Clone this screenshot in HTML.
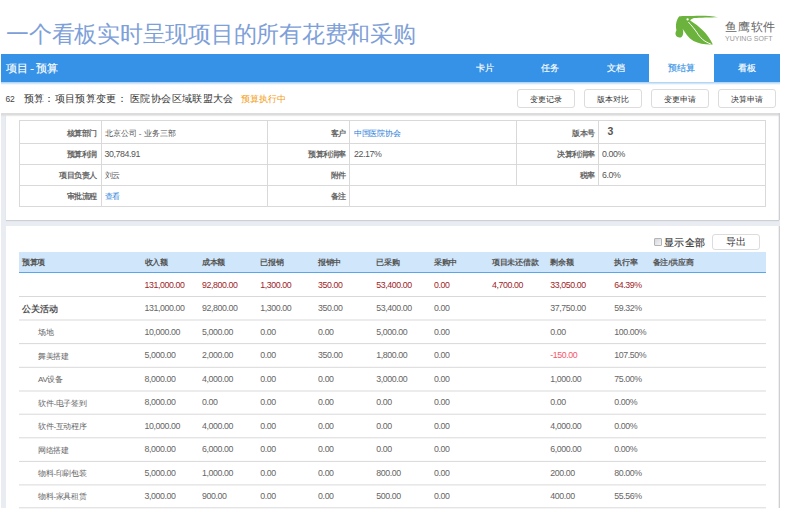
<!DOCTYPE html>
<html><head><meta charset="utf-8">
<style>
*{margin:0;padding:0;box-sizing:border-box}
html,body{width:786px;height:512px;overflow:hidden;background:#fff;font-family:"Liberation Sans",sans-serif;color:#555}
.a{position:absolute;white-space:nowrap;line-height:1}
#title{left:6px;top:23px;font-size:23px;letter-spacing:-0.235px;color:#7ea0d8}
#nav{position:absolute;left:1px;top:54px;width:779px;height:28px;background:#3592e6;}
#navsh{position:absolute;left:1px;top:82px;width:779px;height:3px;background:linear-gradient(rgba(53,146,230,.45),rgba(53,146,230,0))}
.tab{position:absolute;top:0;height:28px;width:65px;text-align:center;color:#fff;font-size:9px;-webkit-text-stroke:0.15px currentColor;line-height:28.5px;text-indent:-1px}
.tab.on{background:#fff;color:#3592e6}
.btn{position:absolute;top:89px;height:18.5px;width:58px;border:1px solid #dcdcdc;border-radius:3px;background:#fff;font-size:8px;line-height:19px;text-align:center;color:#333;letter-spacing:-0.2px}
#frame{position:absolute;left:1px;top:113px;width:779px;height:395px;background:#e9ecf1}
#ftop{position:absolute;left:1px;top:113px;width:779px;height:4px;background:linear-gradient(#dcdcdc 0,#dcdcdc 2px,rgba(220,220,220,.25) 3px,rgba(255,255,255,0) 4px)}
#p1{position:absolute;left:6px;top:115px;width:773px;height:105px;background:#fff;box-shadow:0 1px 1px rgba(0,0,0,.12)}
#p2{position:absolute;left:6px;top:226px;width:773px;height:282px;background:#fff}
.rline{position:absolute;left:778px;width:2px;background:linear-gradient(90deg,rgba(205,205,210,.3) 0,rgba(205,205,210,.3) 1px,#cfcfd3 1px)}
.h{position:absolute;background:#d9d9d9;height:1px}
.v{position:absolute;background:#d9d9d9;width:1px}
.lb{position:absolute;font-size:8px;font-weight:bold;color:#666;text-align:right;line-height:1;white-space:nowrap;letter-spacing:-0.4px}
.vl{position:absolute;font-size:8px;color:#555;line-height:1;white-space:nowrap}
.th{position:absolute;font-size:8px;font-weight:bold;color:#555;line-height:1;white-space:nowrap;letter-spacing:-0.3px}
.td{position:absolute;font-size:8.8px;letter-spacing:-0.4px;color:#666;line-height:1;white-space:nowrap}
.red{color:#9e2428}
.grp{font-size:9px;font-weight:bold;color:#555;letter-spacing:0}
.nm{font-size:8px;letter-spacing:-0.3px;color:#666}
.num{font-size:8.8px;letter-spacing:-0.4px;margin-top:-0.5px}
.neg{color:#f5566a}
</style></head><body>
<div id="title" class="a">一个看板实时呈现项目的所有花费和采购</div>

<svg style="position:absolute;left:670px;top:10px" width="60" height="40" viewBox="0 0 60 40">
<path d="M9.4 6.2 C13 5.8 19 5.9 23 6.1 C31 5.6 40 5.9 48 7.2 C40 7.4 30 7.5 24 8.1 C22.4 8.5 21.2 9.3 20.2 10.6 C29 16 38 24 42.8 34.4 C37 35 29.5 34 23.5 31 C18.5 28 15 22.5 12.6 18.7 C13.6 21 13.6 25 11.6 27 C9.5 28.3 6.2 27.2 5.5 24.2 C5.2 22.3 6.3 21 6.4 20.2 C5.6 17 5.8 12 7.4 9.2 C8 7.9 8.6 6.8 9.4 6.2 Z" fill="#6cb33e"/>
<path d="M18.4 12 C21 15 25 19.5 27 22.7 C30 27.6 34 31.6 40.8 34" stroke="#fff" stroke-width="1" fill="none"/>
<circle cx="17.6" cy="9.4" r="1.15" fill="#fff"/>
</svg>
<div class="a" style="left:725px;top:21px;font-size:12px;letter-spacing:0.8px;color:#666">鱼鹰软件</div>
<div class="a" style="left:725px;top:35px;font-size:7px;color:#999">YUYING SOFT</div>

<div id="nav">
  <div class="a" style="left:5px;top:9px;font-size:11px;letter-spacing:-0.3px;color:#fff;-webkit-text-stroke:0.15px #fff">项目 - 预算</div>
  <div class="tab" style="left:452px">卡片</div>
  <div class="tab" style="left:517px">任务</div>
  <div class="tab" style="left:583px">文档</div>
  <div class="tab on" style="left:648px">预结算</div>
  <div class="tab" style="left:713px;width:66px">看板</div>
</div>

<div id="navsh"></div>
<div class="a" style="left:5.5px;top:95px;font-size:8.5px;letter-spacing:-0.3px;color:#444">62</div>
<div class="a" style="left:23.5px;top:94px;font-size:10px;letter-spacing:0.35px;color:#333">预算：项目预算变更： 医院协会区域联盟大会</div>
<div class="a" style="left:241px;top:95px;font-size:9px;color:#f39a10">预算执行中</div>

<div class="btn" style="left:517px">变更记录</div>
<div class="btn" style="left:584px">版本对比</div>
<div class="btn" style="left:651px">变更申请</div>
<div class="btn" style="left:718px">决算申请</div>

<div id="frame"></div>
<div id="p1"></div>
<div id="p2"></div>
<div id="ftop"></div>
<div class="rline" style="top:113px;height:107px"></div><div class="rline" style="top:226px;height:282px"></div>

<div class="h" style="left:19px;top:120px;width:747px"></div>
<div class="h" style="left:19px;top:143px;width:747px"></div>
<div class="h" style="left:19px;top:164px;width:747px"></div>
<div class="h" style="left:19px;top:185px;width:747px"></div>
<div class="h" style="left:19px;top:206px;width:747px"></div>
<div class="v" style="left:19px;top:120px;height:87px"></div>
<div class="v" style="left:101px;top:120px;height:87px"></div>
<div class="v" style="left:267px;top:120px;height:87px"></div>
<div class="v" style="left:349px;top:120px;height:87px"></div>
<div class="v" style="left:516px;top:120px;height:65px"></div>
<div class="v" style="left:598px;top:120px;height:65px"></div>
<div class="v" style="left:765px;top:120px;height:87px"></div>

<div class="lb" style="right:689px;top:129.6px">核算部门</div>
<div class="vl" style="left:104.5px;top:129.6px">北京公司 - 业务三部</div>
<div class="lb" style="right:689px;top:150.6px">预算利润</div>
<div class="vl num" style="left:104.5px;top:150.6px">30,784.91</div>
<div class="lb" style="right:689px;top:171.6px">项目负责人</div>
<div class="vl" style="left:104.5px;top:171.6px;letter-spacing:-0.3px">刘云</div>
<div class="lb" style="right:689px;top:192.6px">审批流程</div>
<div class="vl" style="left:104.5px;top:192.6px;color:#2a80da;letter-spacing:-0.3px">查看</div>

<div class="lb" style="right:440px;top:129.6px">客户</div>
<div class="vl" style="left:354px;top:129.6px;color:#2a80da;letter-spacing:-0.3px">中国医院协会</div>
<div class="lb" style="right:440px;top:150.6px">预算利润率</div>
<div class="vl num" style="left:354px;top:150.6px">22.17%</div>
<div class="lb" style="right:440px;top:171.6px">附件</div>
<div class="lb" style="right:440px;top:192.6px">备注</div>

<div class="lb" style="right:191px;top:129.6px">版本号</div>
<div class="vl" style="left:607.5px;top:126px;font-size:10.5px;font-weight:bold;color:#555">3</div>
<div class="lb" style="right:191px;top:150.6px">决算利润率</div>
<div class="vl num" style="left:602px;top:150.6px">0.00%</div>
<div class="lb" style="right:191px;top:171.6px">税率</div>
<div class="vl num" style="left:602px;top:171.6px">6.0%</div>

<div style="position:absolute;left:654px;top:238px;width:8px;height:8px;border:1px solid #b4b4b4;border-radius:1px;background:linear-gradient(135deg,#d4d8e0,#f4f4f6)"></div>
<div class="a" style="left:664px;top:237.5px;font-size:10px;letter-spacing:0.4px;color:#333;-webkit-text-stroke:0.15px #333">显示全部</div>
<div class="btn" style="left:712px;top:234px;width:48px;height:16px;font-size:10px;line-height:14px;color:#333">导出</div>

<div id="tbl"><div style="position:absolute;left:19px;top:252px;width:747px;height:20px;background:#cfe6fb"></div>
<div style="position:absolute;left:19px;top:272px;width:747px;height:1px;background:#5aa6ea"></div>
<div class="th" style="left:22px;top:259px">预算项</div>
<div class="th" style="left:144.5px;top:259px">收入额</div>
<div class="th" style="left:202px;top:259px">成本额</div>
<div class="th" style="left:260.3px;top:259px">已报销</div>
<div class="th" style="left:318.1px;top:259px">报销中</div>
<div class="th" style="left:376.2px;top:259px">已采购</div>
<div class="th" style="left:433.9px;top:259px">采购中</div>
<div class="th" style="left:492px;top:259px">项目未还借款</div>
<div class="th" style="left:550.3px;top:259px">剩余额</div>
<div class="th" style="left:614.2px;top:259px">执行率</div>
<div class="th" style="left:652.8px;top:259px">备注/供应商</div>
<div class="td red" style="left:144.5px;top:280.5px">131,000.00</div>
<div class="td red" style="left:202px;top:280.5px">92,800.00</div>
<div class="td red" style="left:260.3px;top:280.5px">1,300.00</div>
<div class="td red" style="left:318.1px;top:280.5px">350.00</div>
<div class="td red" style="left:376.2px;top:280.5px">53,400.00</div>
<div class="td red" style="left:433.9px;top:280.5px">0.00</div>
<div class="td red" style="left:492px;top:280.5px">4,700.00</div>
<div class="td red" style="left:550.3px;top:280.5px">33,050.00</div>
<div class="td red" style="left:614.2px;top:280.5px">64.39%</div>
<div class="td grp" style="left:22px;top:304.9px">公关活动</div>
<div class="td" style="left:144.5px;top:304.0px">131,000.00</div>
<div class="td" style="left:202px;top:304.0px">92,800.00</div>
<div class="td" style="left:260.3px;top:304.0px">1,300.00</div>
<div class="td" style="left:318.1px;top:304.0px">350.00</div>
<div class="td" style="left:376.2px;top:304.0px">53,400.00</div>
<div class="td" style="left:433.9px;top:304.0px">0.00</div>
<div class="td" style="left:550.3px;top:304.0px">37,750.00</div>
<div class="td" style="left:614.2px;top:304.0px">59.32%</div>
<div class="td nm" style="left:38px;top:328.9px">场地</div>
<div class="td" style="left:144.5px;top:327.6px">10,000.00</div>
<div class="td" style="left:202px;top:327.6px">5,000.00</div>
<div class="td" style="left:260.3px;top:327.6px">0.00</div>
<div class="td" style="left:318.1px;top:327.6px">0.00</div>
<div class="td" style="left:376.2px;top:327.6px">5,000.00</div>
<div class="td" style="left:433.9px;top:327.6px">0.00</div>
<div class="td" style="left:550.3px;top:327.6px">0.00</div>
<div class="td" style="left:614.2px;top:327.6px">100.00%</div>
<div class="td nm" style="left:38px;top:352.6px">舞美搭建</div>
<div class="td" style="left:144.5px;top:351.3px">5,000.00</div>
<div class="td" style="left:202px;top:351.3px">2,000.00</div>
<div class="td" style="left:260.3px;top:351.3px">0.00</div>
<div class="td" style="left:318.1px;top:351.3px">350.00</div>
<div class="td" style="left:376.2px;top:351.3px">1,800.00</div>
<div class="td" style="left:433.9px;top:351.3px">0.00</div>
<div class="td neg" style="left:550.3px;top:351.3px">-150.00</div>
<div class="td" style="left:614.2px;top:351.3px">107.50%</div>
<div class="td nm" style="left:38px;top:376.3px">AV设备</div>
<div class="td" style="left:144.5px;top:375.0px">8,000.00</div>
<div class="td" style="left:202px;top:375.0px">4,000.00</div>
<div class="td" style="left:260.3px;top:375.0px">0.00</div>
<div class="td" style="left:318.1px;top:375.0px">0.00</div>
<div class="td" style="left:376.2px;top:375.0px">3,000.00</div>
<div class="td" style="left:433.9px;top:375.0px">0.00</div>
<div class="td" style="left:550.3px;top:375.0px">1,000.00</div>
<div class="td" style="left:614.2px;top:375.0px">75.00%</div>
<div class="td nm" style="left:38px;top:399.5px">软件-电子签到</div>
<div class="td" style="left:144.5px;top:398.2px">8,000.00</div>
<div class="td" style="left:202px;top:398.2px">0.00</div>
<div class="td" style="left:260.3px;top:398.2px">0.00</div>
<div class="td" style="left:318.1px;top:398.2px">0.00</div>
<div class="td" style="left:376.2px;top:398.2px">0.00</div>
<div class="td" style="left:433.9px;top:398.2px">0.00</div>
<div class="td" style="left:550.3px;top:398.2px">0.00</div>
<div class="td" style="left:614.2px;top:398.2px">0.00%</div>
<div class="td nm" style="left:38px;top:423.1px">软件-互动程序</div>
<div class="td" style="left:144.5px;top:421.8px">10,000.00</div>
<div class="td" style="left:202px;top:421.8px">4,000.00</div>
<div class="td" style="left:260.3px;top:421.8px">0.00</div>
<div class="td" style="left:318.1px;top:421.8px">0.00</div>
<div class="td" style="left:376.2px;top:421.8px">0.00</div>
<div class="td" style="left:433.9px;top:421.8px">0.00</div>
<div class="td" style="left:550.3px;top:421.8px">4,000.00</div>
<div class="td" style="left:614.2px;top:421.8px">0.00%</div>
<div class="td nm" style="left:38px;top:446.7px">网络搭建</div>
<div class="td" style="left:144.5px;top:445.4px">8,000.00</div>
<div class="td" style="left:202px;top:445.4px">6,000.00</div>
<div class="td" style="left:260.3px;top:445.4px">0.00</div>
<div class="td" style="left:318.1px;top:445.4px">0.00</div>
<div class="td" style="left:376.2px;top:445.4px">0.00</div>
<div class="td" style="left:433.9px;top:445.4px">0.00</div>
<div class="td" style="left:550.3px;top:445.4px">6,000.00</div>
<div class="td" style="left:614.2px;top:445.4px">0.00%</div>
<div class="td nm" style="left:38px;top:470.2px">物料-印刷包装</div>
<div class="td" style="left:144.5px;top:468.9px">5,000.00</div>
<div class="td" style="left:202px;top:468.9px">1,000.00</div>
<div class="td" style="left:260.3px;top:468.9px">0.00</div>
<div class="td" style="left:318.1px;top:468.9px">0.00</div>
<div class="td" style="left:376.2px;top:468.9px">800.00</div>
<div class="td" style="left:433.9px;top:468.9px">0.00</div>
<div class="td" style="left:550.3px;top:468.9px">200.00</div>
<div class="td" style="left:614.2px;top:468.9px">80.00%</div>
<div class="td nm" style="left:38px;top:493.1px">物料-家具租赁</div>
<div class="td" style="left:144.5px;top:491.8px">3,000.00</div>
<div class="td" style="left:202px;top:491.8px">900.00</div>
<div class="td" style="left:260.3px;top:491.8px">0.00</div>
<div class="td" style="left:318.1px;top:491.8px">0.00</div>
<div class="td" style="left:376.2px;top:491.8px">500.00</div>
<div class="td" style="left:433.9px;top:491.8px">0.00</div>
<div class="td" style="left:550.3px;top:491.8px">400.00</div>
<div class="td" style="left:614.2px;top:491.8px">55.56%</div>
<svg style="position:absolute;left:0;top:0" width="786" height="512"><rect x="19" y="296" width="747" height="1" fill="#d9d9d9"/><rect x="19" y="319.5" width="747" height="1" fill="#d9d9d9"/><rect x="19" y="343.1" width="747" height="1" fill="#d9d9d9"/><rect x="19" y="366.8" width="747" height="1" fill="#d9d9d9"/><rect x="19" y="390.5" width="747" height="1" fill="#d9d9d9"/><rect x="19" y="413.7" width="747" height="1" fill="#d9d9d9"/><rect x="19" y="437.3" width="747" height="1" fill="#d9d9d9"/><rect x="19" y="460.9" width="747" height="1" fill="#d9d9d9"/><rect x="19" y="484.4" width="747" height="1" fill="#d9d9d9"/><rect x="19" y="507.3" width="747" height="1" fill="#d9d9d9"/></svg></div><!--/tbl-->
</body></html>
